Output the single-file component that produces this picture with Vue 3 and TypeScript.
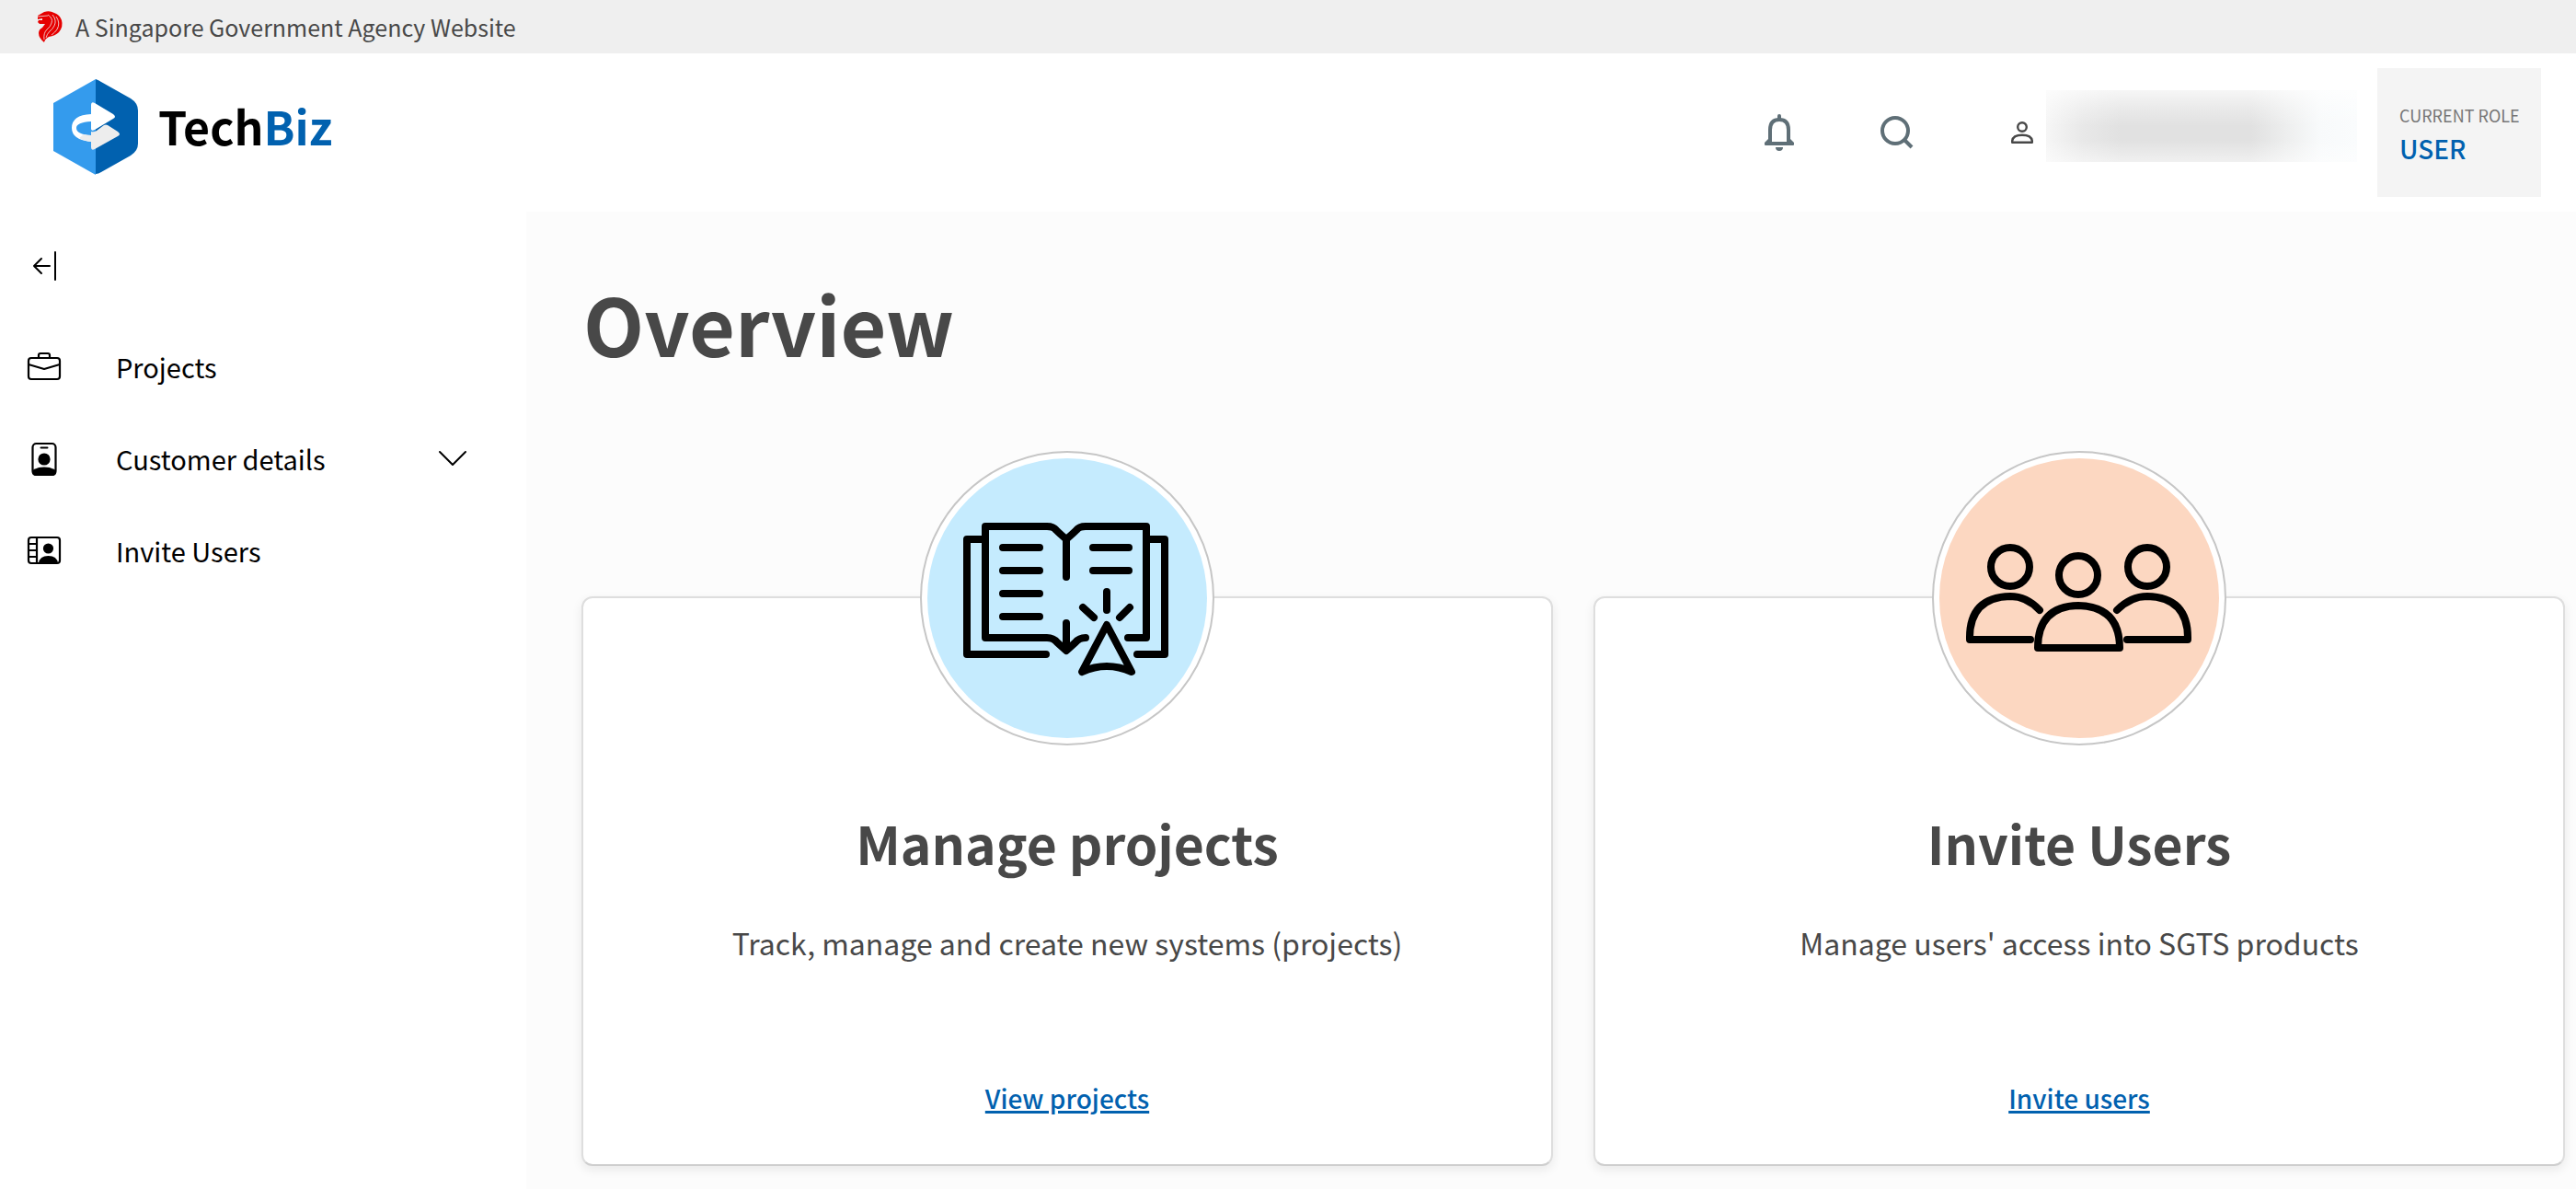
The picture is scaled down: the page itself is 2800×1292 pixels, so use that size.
<script setup lang="ts">
import { ref } from 'vue'

interface Card {
  id: string
  title: string
  text: string
  link: string
}

const cards: Card[] = [
  { id: 'projects', title: 'Manage projects', text: 'Track, manage and create new systems (projects)', link: 'View projects' },
  { id: 'users', title: 'Invite Users', text: "Manage users' access into SGTS products", link: 'Invite users' },
]

const expanded = ref(false)
</script>

<template>
  <div class="page">
    <div class="banner">
      <svg class="lion" viewBox="0 0 28 34" aria-hidden="true">
        <path fill="#e60000" d="M1 5 8 1Q14-1 19 2Q25 4 27 10Q29 17 24 23Q20 27 13 28Q9 30 8 34Q2 29 2 24Q2 20 6 18L9 14H3L1 12 2 10H6V8L1 9Z" />
        <g fill="none" stroke="#efefef" stroke-width="0.8">
          <path d="M1 6 12 5M12 4Q18 8 16 13Q15 17 11 20Q7 24 8 31M17 4Q22 10 19 16Q17 20 14 22Q11 25 10 29M21 6Q26 13 22 20Q20 23 16 26" />
        </g>
      </svg>
      <span>A Singapore Government Agency Website</span>
    </div>

    <header class="header">
      <a class="brand" href="#">
        <svg class="mark" viewBox="0 0 92 104" aria-hidden="true">
          <path fill="#349bed" d="M46 0V104L0 78V26Z" />
          <path fill="#0161af" d="M46 0Q49 1 52 3L84 21Q92 26 92 34V70Q92 78 84 83L52 101Q49 103 46 103Z" />
          <path fill="#fff" d="M41 28Q41 24 45 26L65 38Q69 41 65 43L45 55Q41 57 41 54V46Q25 47 25 53Q25 60 41 61V68Q20 66 20 53Q20 39 41 38Z" />
          <path fill="#ededed" d="M41 57Q44 58 47 56L55 50Q57 49 59 50L70 57Q74 60 70 62L45 76Q41 78 41 74V68Q33 67 28 64L33 60Q37 61 41 61Z" />
        </svg>
        <span class="name">Tech<span class="biz">Biz</span></span>
      </a>
      <div class="tools">
        <button class="tool" aria-label="Notifications">
          <svg class="bell" viewBox="0 0 32 40" aria-hidden="true">
            <path fill="none" stroke="#5f6f77" stroke-width="4" d="M6 32V17Q6 6 16 6Q26 6 26 17V32" />
            <path fill="#5f6f77" d="M14 2Q14 0 16 0Q18 0 18 2V6H14ZM4 27 8 30H24L28 27 32 31V33Q32 34 31 34H1Q0 34 0 33V31ZM12 36H20Q20 40 16 40Q12 40 12 36Z" />
          </svg>
        </button>
        <button class="tool" aria-label="Search">
          <svg class="search" viewBox="0 0 36 36" aria-hidden="true">
            <g fill="none" stroke="#5f6f77" stroke-width="4"><circle cx="16" cy="16" r="14" /><path d="m25 25 9 9" /></g>
          </svg>
        </button>
        <button class="account" aria-label="Account">
          <svg class="person" viewBox="0 0 24 24" aria-hidden="true">
            <g fill="none" stroke="#484848" stroke-width="2.4" stroke-linejoin="round"><circle cx="12" cy="6" r="4.8" /><path d="M1.2 22.8V21Q2 14.8 12 14.8Q22 14.8 22.8 21V22.8Z" /></g>
          </svg>
          <span class="masked"></span>
        </button>
        <div class="role">
          <span class="role-label">CURRENT ROLE</span>
          <span class="role-value">USER</span>
        </div>
      </div>
    </header>

    <div class="body">
      <nav class="sidebar" aria-label="Main">
        <button class="collapse" aria-label="Collapse menu">
          <svg viewBox="0 0 26 32" aria-hidden="true">
            <path fill="none" stroke="#000" stroke-width="2" stroke-linecap="round" stroke-linejoin="round" d="M18 16H1M9 8 1 16 9 24M24 1V31" />
          </svg>
        </button>
        <a class="item" href="#">
          <svg viewBox="0 0 36 36" aria-hidden="true">
            <g fill="none" stroke="#000" stroke-width="2.2" stroke-linejoin="round">
              <rect x="1" y="9" width="34" height="23" rx="3" /><path d="M12 8V6Q12 4 14 4H22Q24 4 24 6V8M1 16 18 21 35 16" />
            </g>
          </svg>
          <span>Projects</span>
        </a>
        <button class="item" :aria-expanded="expanded" @click="expanded = !expanded">
          <svg viewBox="0 0 36 36" aria-hidden="true">
            <rect x="5.5" y="2" width="25" height="34" rx="4" fill="none" stroke="#000" stroke-width="2.2" />
            <circle cx="18" cy="19" r="6.6" />
            <path d="M5 31Q11 27.6 18 27.6Q25 27.6 31 31V33Q31 37 27 37H9Q5 37 5 33Z" />
            <path d="M14.5 6.5H21.5" stroke="#000" stroke-width="2" stroke-linecap="round" />
          </svg>
          <span>Customer details</span>
          <svg class="chevron" viewBox="0 0 30 17" aria-hidden="true">
            <path fill="none" stroke="#000" stroke-width="2" stroke-linecap="round" stroke-linejoin="round" d="M1 1 15 15 29 1" />
          </svg>
        </button>
        <a class="item" href="#">
          <svg viewBox="0 0 36 36" aria-hidden="true">
            <g fill="none" stroke="#000" stroke-width="2.2">
              <rect x="1" y="4" width="34" height="28" rx="3" /><path d="M10 4V32M1 11H10M1 18H10M1 25H10" />
            </g>
            <circle cx="22.5" cy="16" r="5.6" />
            <path d="M12 32Q13 24 22.5 24Q32 24 33 32Z" />
          </svg>
          <span>Invite Users</span>
        </a>
      </nav>

      <main class="content">
        <h1>Overview</h1>
        <div class="cards">
          <section v-for="card in cards" :key="card.id" class="card">
            <div class="badge" :class="card.id">
              <svg v-if="card.id === 'projects'" viewBox="0 20 304 304" aria-hidden="true">
                <g fill="none" stroke="#000" stroke-width="8" stroke-linecap="round" stroke-linejoin="round">
                  <path d="M151 149V108Q144 102 140 98Q137 94 130 94H63V215H130Q137 215 141 220L151 229 161 220Q165 215 172 215M151 108Q158 102 162 98Q165 94 172 94H238V215H218M151 199V227" />
                  <path d="M62 108H43V233H129M239 108H258V233H228" />
                  <path d="M82 117H122M82 142H122M82 167H122M82 192H122M180 117H219M180 142H219M195 165V185M169 182 181 193M220 182 209 193" />
                  <path d="M195 201 222 252Q195 240 168 252Z" />
                </g>
              </svg>
              <svg v-else viewBox="0 20 304 304" aria-hidden="true">
                <g fill="none" stroke="#000" stroke-width="8" stroke-linecap="round" stroke-linejoin="round">
                  <circle cx="77" cy="138" r="21" /><circle cx="226" cy="138" r="21" /><circle cx="151" cy="147" r="21" />
                  <path d="M99 217H33Q32 171 77 170Q95 170 109 185M204 217H270Q271 171 226 170Q208 170 193 185M107 226H196Q196 181 151 180Q107 181 107 226Z" />
                </g>
              </svg>
            </div>
            <h2>{{ card.title }}</h2>
            <p>{{ card.text }}</p>
            <a class="link" href="#">{{ card.link }}</a>
          </section>
        </div>
      </main>
    </div>
  </div>
</template>

<style>
body {
  margin: 0;
  background: #fff;
}
</style>

<style scoped>
.page {
  display: flex;
  flex-direction: column;
  min-height: 100vh;
  color: #484848;
  font-family: "Noto Sans CJK SC", "Noto Sans", sans-serif;
}
.page * {
  box-sizing: border-box;
}
button {
  padding: 0;
  border: 0;
  background: none;
  color: inherit;
  font: inherit;
  text-align: left;
}
a {
  color: inherit;
  text-decoration: none;
}
svg {
  display: block;
  flex: none;
  overflow: visible;
}
.banner {
  display: flex;
  align-items: center;
  gap: 14px;
  height: 58px;
  padding: 0 40px;
  background: #efefef;
  font-size: 25px;
}
.lion {
  width: 28px;
  height: 34px;
}
.header {
  display: flex;
  align-items: center;
  justify-content: space-between;
  height: 172px;
  padding: 0 38px 0 58px;
}
.brand {
  display: flex;
  align-items: center;
  gap: 22px;
  padding-bottom: 12px;
}
.mark {
  width: 92px;
  height: 104px;
}
.name {
  padding-bottom: 4px;
  color: #000;
  font-size: 50px;
  line-height: 64px;
  font-weight: 700;
}
.biz {
  color: #0161af;
}
.tools {
  display: flex;
  align-items: center;
}
.tool {
  margin-right: 94px;
}
.bell {
  width: 32px;
  height: 40px;
}
.search {
  width: 36px;
  height: 36px;
}
.account {
  display: flex;
  align-items: center;
  gap: 14px;
  margin: 0 22px 0 12px;
}
.person {
  width: 24px;
  height: 24px;
}
.masked {
  width: 338px;
  height: 78px;
  margin-bottom: 14px;
  background:
    linear-gradient(to bottom, rgba(255, 255, 255, 0.7), rgba(255, 255, 255, 0.3) 25%, rgba(255, 255, 255, 0) 50%, rgba(255, 255, 255, 0) 70%, rgba(255, 255, 255, 0.5)),
    linear-gradient(to right, #f6f6f6, #e8e8e8 12%, #e1e1e1 24%, #e1e1e1 66%, #eeefef 78%, #f8fafb 88%, #fafcfd);
}
.role {
  display: flex;
  flex-direction: column;
  justify-content: center;
  width: 178px;
  height: 140px;
  padding: 6px 0 0 24px;
  background: #f4f4f4;
}
.role-label {
  color: #767676;
  font-size: 18px;
  line-height: 28px;
}
.role-value {
  color: #0161af;
  font-size: 28px;
  line-height: 44px;
  font-weight: 500;
}
.body {
  display: flex;
  flex: 1;
}
.sidebar {
  display: flex;
  flex: none;
  flex-direction: column;
  width: 572px;
  padding: 43px 65px 0 30px;
  color: #000;
}
.collapse {
  width: 26px;
  height: 32px;
  margin: 0 0 43px 6px;
}
.item {
  display: flex;
  align-items: center;
  gap: 60px;
  height: 100px;
  font-size: 29px;
}
.item svg {
  width: 36px;
  height: 36px;
}
.item .chevron {
  width: 30px;
  height: 17px;
  margin-left: auto;
}
.content {
  flex: 1;
  padding: 65px 12px 24px 60px;
  background: #fcfcfc;
}
h1 {
  margin: 0 2px;
  font-size: 86px;
  line-height: 112px;
  font-weight: 700;
}
.cards {
  display: grid;
  grid-template-columns: 1fr 1fr;
  gap: 44px;
  margin-top: 241px;
}
.card {
  display: flex;
  flex-direction: column;
  align-items: center;
  height: 619px;
  border: 2px solid #dedede;
  border-bottom-color: #cecece;
  border-radius: 12px;
  background: #fff;
  box-shadow: 0 4px 12px rgba(0, 0, 0, 0.08);
}
.badge {
  width: 320px;
  height: 320px;
  margin-top: -160px;
  padding: 6px;
  border: 2px solid #c6c6c6;
  border-radius: 50%;
  background: #fff;
}
.badge svg {
  width: 304px;
  height: 304px;
  border-radius: 50%;
}
.projects svg {
  background: #c5ebfe;
}
.users svg {
  background: #fcd7c1;
}
h2 {
  margin: 65px 0 0;
  font-size: 57px;
  line-height: 80px;
  font-weight: 700;
}
p {
  margin: 45px 0 0;
  font-size: 32px;
  line-height: 48px;
}
.link {
  margin-top: 123px;
  color: #0161af;
  font-size: 28px;
  line-height: 44px;
  font-weight: 500;
  text-decoration: underline;
  text-decoration-thickness: 3px;
}
</style>
